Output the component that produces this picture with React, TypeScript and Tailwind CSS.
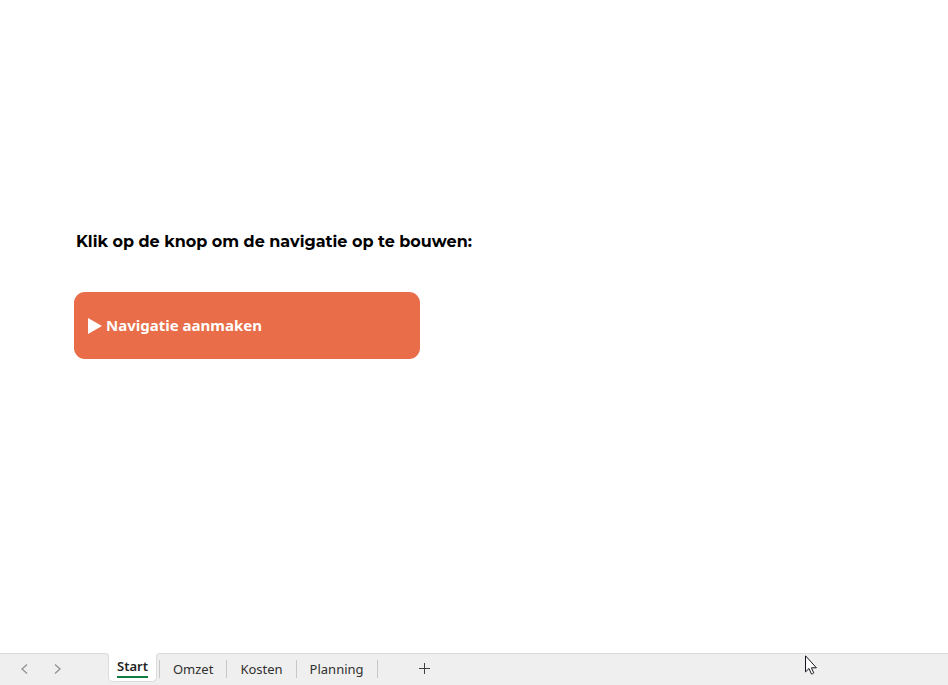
import { useState } from "react";

const sheets = ["Start", "Omzet", "Kosten", "Planning"];

type SheetTabProps = {
	name: string;
	active: boolean;
	onSelect: () => void;
};

function SheetTab({ name, active, onSelect }: SheetTabProps) {
	if (active) {
		return (
			<button
				type="button"
				role="tab"
				aria-selected="true"
				onClick={onSelect}
				className="relative -mt-px mr-[2px] flex h-[29px] items-start rounded-b-[5px] border border-t-0 border-[#dcdcdc] bg-white px-2 text-[13px] font-semibold text-[#242424]"
			>
				{/* rounded shoulders where the bar meets the tab */}
				<span className="absolute -left-1 top-0 bg-white">
					<span className="block size-1 rounded-tr-[4px] border-r border-t border-[#dadada] bg-[#efefef]" />
				</span>
				<span className="absolute -right-1 top-0 bg-white">
					<span className="block size-1 rounded-tl-[4px] border-l border-t border-[#dadada] bg-[#efefef]" />
				</span>
				<span className="block h-[25px] border-b-2 border-[#107c41] leading-[26px]">{name}</span>
			</button>
		);
	}

	return (
		<button
			type="button"
			role="tab"
			aria-selected="false"
			onClick={onSelect}
			className="mt-[5px] h-5 px-[13px] text-[13px] leading-5 text-[#303030]"
		>
			{name}
		</button>
	);
}

function Divider() {
	return <span className="mt-[6px] h-[18px] w-px bg-[#c8c8c8]" />;
}

function Chevron({ points }: { points: string }) {
	return (
		<svg width="8" height="10" viewBox="0 0 8 10" fill="none" stroke="#919191" strokeWidth="1.3">
			<polyline points={points} />
		</svg>
	);
}

function SheetBar() {
	const [activeSheet, setActiveSheet] = useState("Start");

	return (
		<footer className="flex h-8 items-start border-t border-[#dadada] bg-[#efefef] font-['Noto_Sans','Open_Sans',sans-serif]">
			<div className="flex h-[29px] w-[108px] shrink-0 items-center gap-[26px] pl-5">
				<button type="button" aria-label="Vorig blad">
					<Chevron points="7,0.5 2,5 7,9.5" />
				</button>
				<button type="button" aria-label="Volgend blad">
					<Chevron points="1,0.5 6,5 1,9.5" />
				</button>
			</div>
			<div role="tablist" className="flex items-start">
				{sheets.map((name, index) => (
					<div key={name} className="flex items-start">
						{index > 0 && <Divider />}
						<SheetTab
							name={name}
							active={name === activeSheet}
							onSelect={() => setActiveSheet(name)}
						/>
					</div>
				))}
				<Divider />
			</div>
			<button type="button" aria-label="Nieuw blad" className="ml-10 mt-2">
				<svg width="13" height="13" viewBox="0 0 13 13" stroke="#404040" strokeWidth="1">
					<path d="M1 6.5h11M6.5 1v11" />
				</svg>
			</button>
		</footer>
	);
}

function Pointer() {
	return (
		<svg
			className="pointer-events-none absolute bottom-[10px] left-[85%] -ml-px"
			width="12"
			height="20"
			viewBox="0 0 12 20"
			fill="#fff"
			stroke="#15151d"
			strokeWidth="1"
		>
			<path d="M.5.8v16.1l3.5-3.4 2.4 5.4q1.5.4 2.3-1.1l-2.3-5h5z" />
		</svg>
	);
}

export default function App() {
	return (
		<div className="relative flex min-h-screen flex-col bg-white">
			<main className="flex-1 px-[74px] pt-[230px]">
				<h1 className="pl-[2px] font-['Montserrat','Inter',sans-serif] text-[16px] font-bold leading-6 text-black">
					Klik op de knop om de navigatie op te bouwen:
				</h1>
				<button
					type="button"
					className="mt-[38px] flex h-[67px] w-full max-w-[346px] items-center gap-1 rounded-[11px] bg-[#e86d48] px-[14px] text-left font-['Noto_Sans',sans-serif] text-[15px] font-bold text-white"
				>
					<svg width="14" height="16" viewBox="0 0 14 16" fill="currentColor">
						<path d="M0 0l14 8-14 8z" />
					</svg>
					<span>Navigatie aanmaken</span>
				</button>
			</main>
			<SheetBar />
			<Pointer />
		</div>
	);
}
